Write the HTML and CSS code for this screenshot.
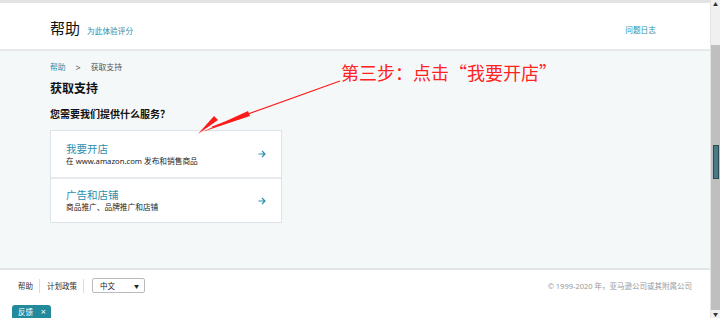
FILE: index.html
```html
<!DOCTYPE html>
<html lang="zh-CN">
<head>
    <meta charset="UTF-8">
    <title>帮助 - 获取支持</title>
    <link rel="stylesheet" href="styles.css">
</head>
<body>
    <div class="page">
        <div class="topbar"></div>
        <header class="header">
            <div class="brand">
                <h1>帮助</h1>
                <a href="#" class="rate">为此体验评分</a>
            </div>
            <a href="#" class="log">问题日志</a>
        </header>

        <main class="content">
            <div class="crumbs">
                <a href="#">帮助</a>
                <span class="sep">&gt;</span>
                <span>获取支持</span>
            </div>
            <h2>获取支持</h2>
            <h3>您需要我们提供什么服务？</h3>
            <div class="card">
                <a href="#" class="option">
                    <div>
                        <div class="option-title">我要开店</div>
                        <div class="option-sub">在 www.amazon.com 发布和销售商品</div>
                    </div>
                    <svg class="arrow" width="8" height="8" viewBox="0 0 8 8">
                        <path d="M0.5 4 H7 M4 1 L7 4 L4 7" stroke="#2b8fae" stroke-width="1.2" fill="none"/>
                    </svg>
                </a>
                <a href="#" class="option">
                    <div>
                        <div class="option-title">广告和店铺</div>
                        <div class="option-sub">商品推广、品牌推广和店铺</div>
                    </div>
                    <svg class="arrow" width="8" height="8" viewBox="0 0 8 8">
                        <path d="M0.5 4 H7 M4 1 L7 4 L4 7" stroke="#2b8fae" stroke-width="1.2" fill="none"/>
                    </svg>
                </a>
            </div>

            <!-- screenshot annotation -->
            <div class="note">第三步：点击“我要开店”</div>
            <svg class="pointer" width="160" height="70" viewBox="0 0 160 70">
                <path d="M150 11 L22 57" stroke="#ff1a1a" stroke-width="1.2" fill="none"/>
                <path d="M60 46 L12 62 L58 41 Z" fill="#ff1a1a"/>
                <path d="M28 50 L8 64 L24 46 Z" fill="#ff1a1a"/>
            </svg>
        </main>

        <footer class="footer">
            <div class="footer-row">
                <nav class="links">
                    <a href="#">帮助</a>
                    <a href="#">计划政策</a>
                    <div class="lang">
                        <span>中文</span>
                        <span class="caret">&#9660;</span>
                    </div>
                </nav>
                <span class="copy">© 1999-2020 年，亚马逊公司或其附属公司</span>
            </div>
            <div class="feedback">反馈 <span class="close">×</span></div>
        </footer>
    </div>

    <div class="scrollbar">
        <div class="track-top">&#9650;</div>
        <div class="thumb"><span class="widget"></span></div>
        <div class="track-bottom">&#9660;</div>
    </div>
</body>
</html>
```

FILE: styles.css
```css
html, body {
    margin: 0;
    height: 100%;
}

body {
    display: flex;
    font-family: "Noto Sans", "Noto Sans CJK SC", sans-serif;
    color: #111;
    background-color: #fff;
    overflow: hidden;
}

a {
    text-decoration: none;
}

.page {
    flex: 1;
    display: flex;
    flex-direction: column;
    min-width: 0;
}

.topbar {
    height: 3px;
    background-color: #e3e3e3;
}

.header {
    height: 46px;
    display: flex;
    align-items: center;
    justify-content: space-between;
    padding: 0 54px 0 50px;
    border-bottom: 2px solid #e6e8e9;
}

.brand {
    display: flex;
    align-items: baseline;
    gap: 7px;
    margin-top: 2px;
}

.header h1 {
    margin: 0;
    font-size: 15px;
    font-weight: normal;
    color: #111;
}

.rate,
.log {
    font-size: 7.7px;
    color: #2b8fae;
}

.log {
    margin-top: 6px;
}

.content {
    position: relative;
    height: 219px;
    box-sizing: border-box;
    padding: 11px 0 0 50px;
    background-color: #f5f8f9;
    border-bottom: 2px solid #e1e5e7;
}

.crumbs {
    font-size: 7.8px;
    line-height: 11px;
    color: #555;
    display: flex;
    gap: 8px;
}

.crumbs a {
    color: #2b8fae;
}

.crumbs .sep {
    margin: 0 2px;
    font-size: 9px;
}

.content h2 {
    margin: 8px 0 0;
    font-size: 12px;
    line-height: 16px;
    font-weight: bold;
    color: #111;
}

.content h3 {
    margin: 10px 0 0;
    font-size: 10px;
    line-height: 14px;
    font-weight: bold;
    color: #111;
}

.card {
    width: 230px;
    margin-top: 9px;
    background-color: #fff;
    border: 1px solid #dde3e6;
}

.option {
    display: flex;
    align-items: center;
    justify-content: space-between;
    height: 46px;
    box-sizing: border-box;
    padding: 0 15px 0 15px;
}

.option + .option {
    border-top: 2px solid #e6eaec;
    height: 45px;
}

.option-title {
    font-size: 10.5px;
    color: #2b8fae;
    line-height: 13px;
}

.option-sub {
    font-size: 7.7px;
    color: #222;
    line-height: 10px;
}

.note {
    position: absolute;
    left: 341px;
    top: 8px;
    font-size: 18px;
    color: #ff2222;
    font-family: "Noto Sans CJK SC", sans-serif;
    white-space: nowrap;
}

.pointer {
    position: absolute;
    left: 190px;
    top: 19px;
}

.footer {
    flex: 1;
    display: flex;
    flex-direction: column;
    justify-content: space-between;
    padding: 8px 0 0 18px;
}

.footer-row {
    display: flex;
    align-items: center;
    justify-content: space-between;
    padding-right: 18px;
}

.links {
    display: flex;
    align-items: center;
    font-size: 7.5px;
}

.links a {
    color: #333;
    padding-right: 6px;
    margin-right: 7px;
    border-right: 1px solid #ddd;
    line-height: 14px;
}

.lang {
    width: 53px;
    height: 15px;
    box-sizing: border-box;
    margin-left: 1px;
    display: flex;
    align-items: center;
    justify-content: space-between;
    padding: 0 5px 0 7px;
    border: 1px solid #bbb;
    border-radius: 2px;
    background-color: #fff;
    color: #222;
}

.caret {
    font-size: 5px;
    color: #222;
}

.copy {
    font-size: 7.5px;
    color: #999;
}

.feedback {
    align-self: flex-start;
    margin: 0 0 0 -6px;
    width: 39px;
    height: 13px;
    box-sizing: border-box;
    padding: 1px 5px 0 6px;
    background-color: #23899d;
    border-radius: 3px 3px 0 0;
    color: #fff;
    font-size: 7.5px;
    display: flex;
    justify-content: space-between;
}

.feedback .close {
    font-size: 9px;
    line-height: 11px;
}

.scrollbar {
    width: 9px;
    display: flex;
    flex-direction: column;
    background-color: #f0f0f0;
    border-left: 1px solid #e4e4e4;
}

.track-top,
.track-bottom {
    font-size: 5px;
    color: #333;
    text-align: center;
    line-height: 8px;
}

.track-top {
    height: 45px;
}

.thumb {
    flex: 1;
    position: relative;
    background-color: #bfbfbf;
}

.widget {
    position: absolute;
    left: 2px;
    top: 100px;
    width: 6px;
    height: 34px;
    background-color: #4a7a86;
    border: 1px solid #2c4a52;
    box-sizing: border-box;
}

.track-bottom {
    height: 8px;
}
```
